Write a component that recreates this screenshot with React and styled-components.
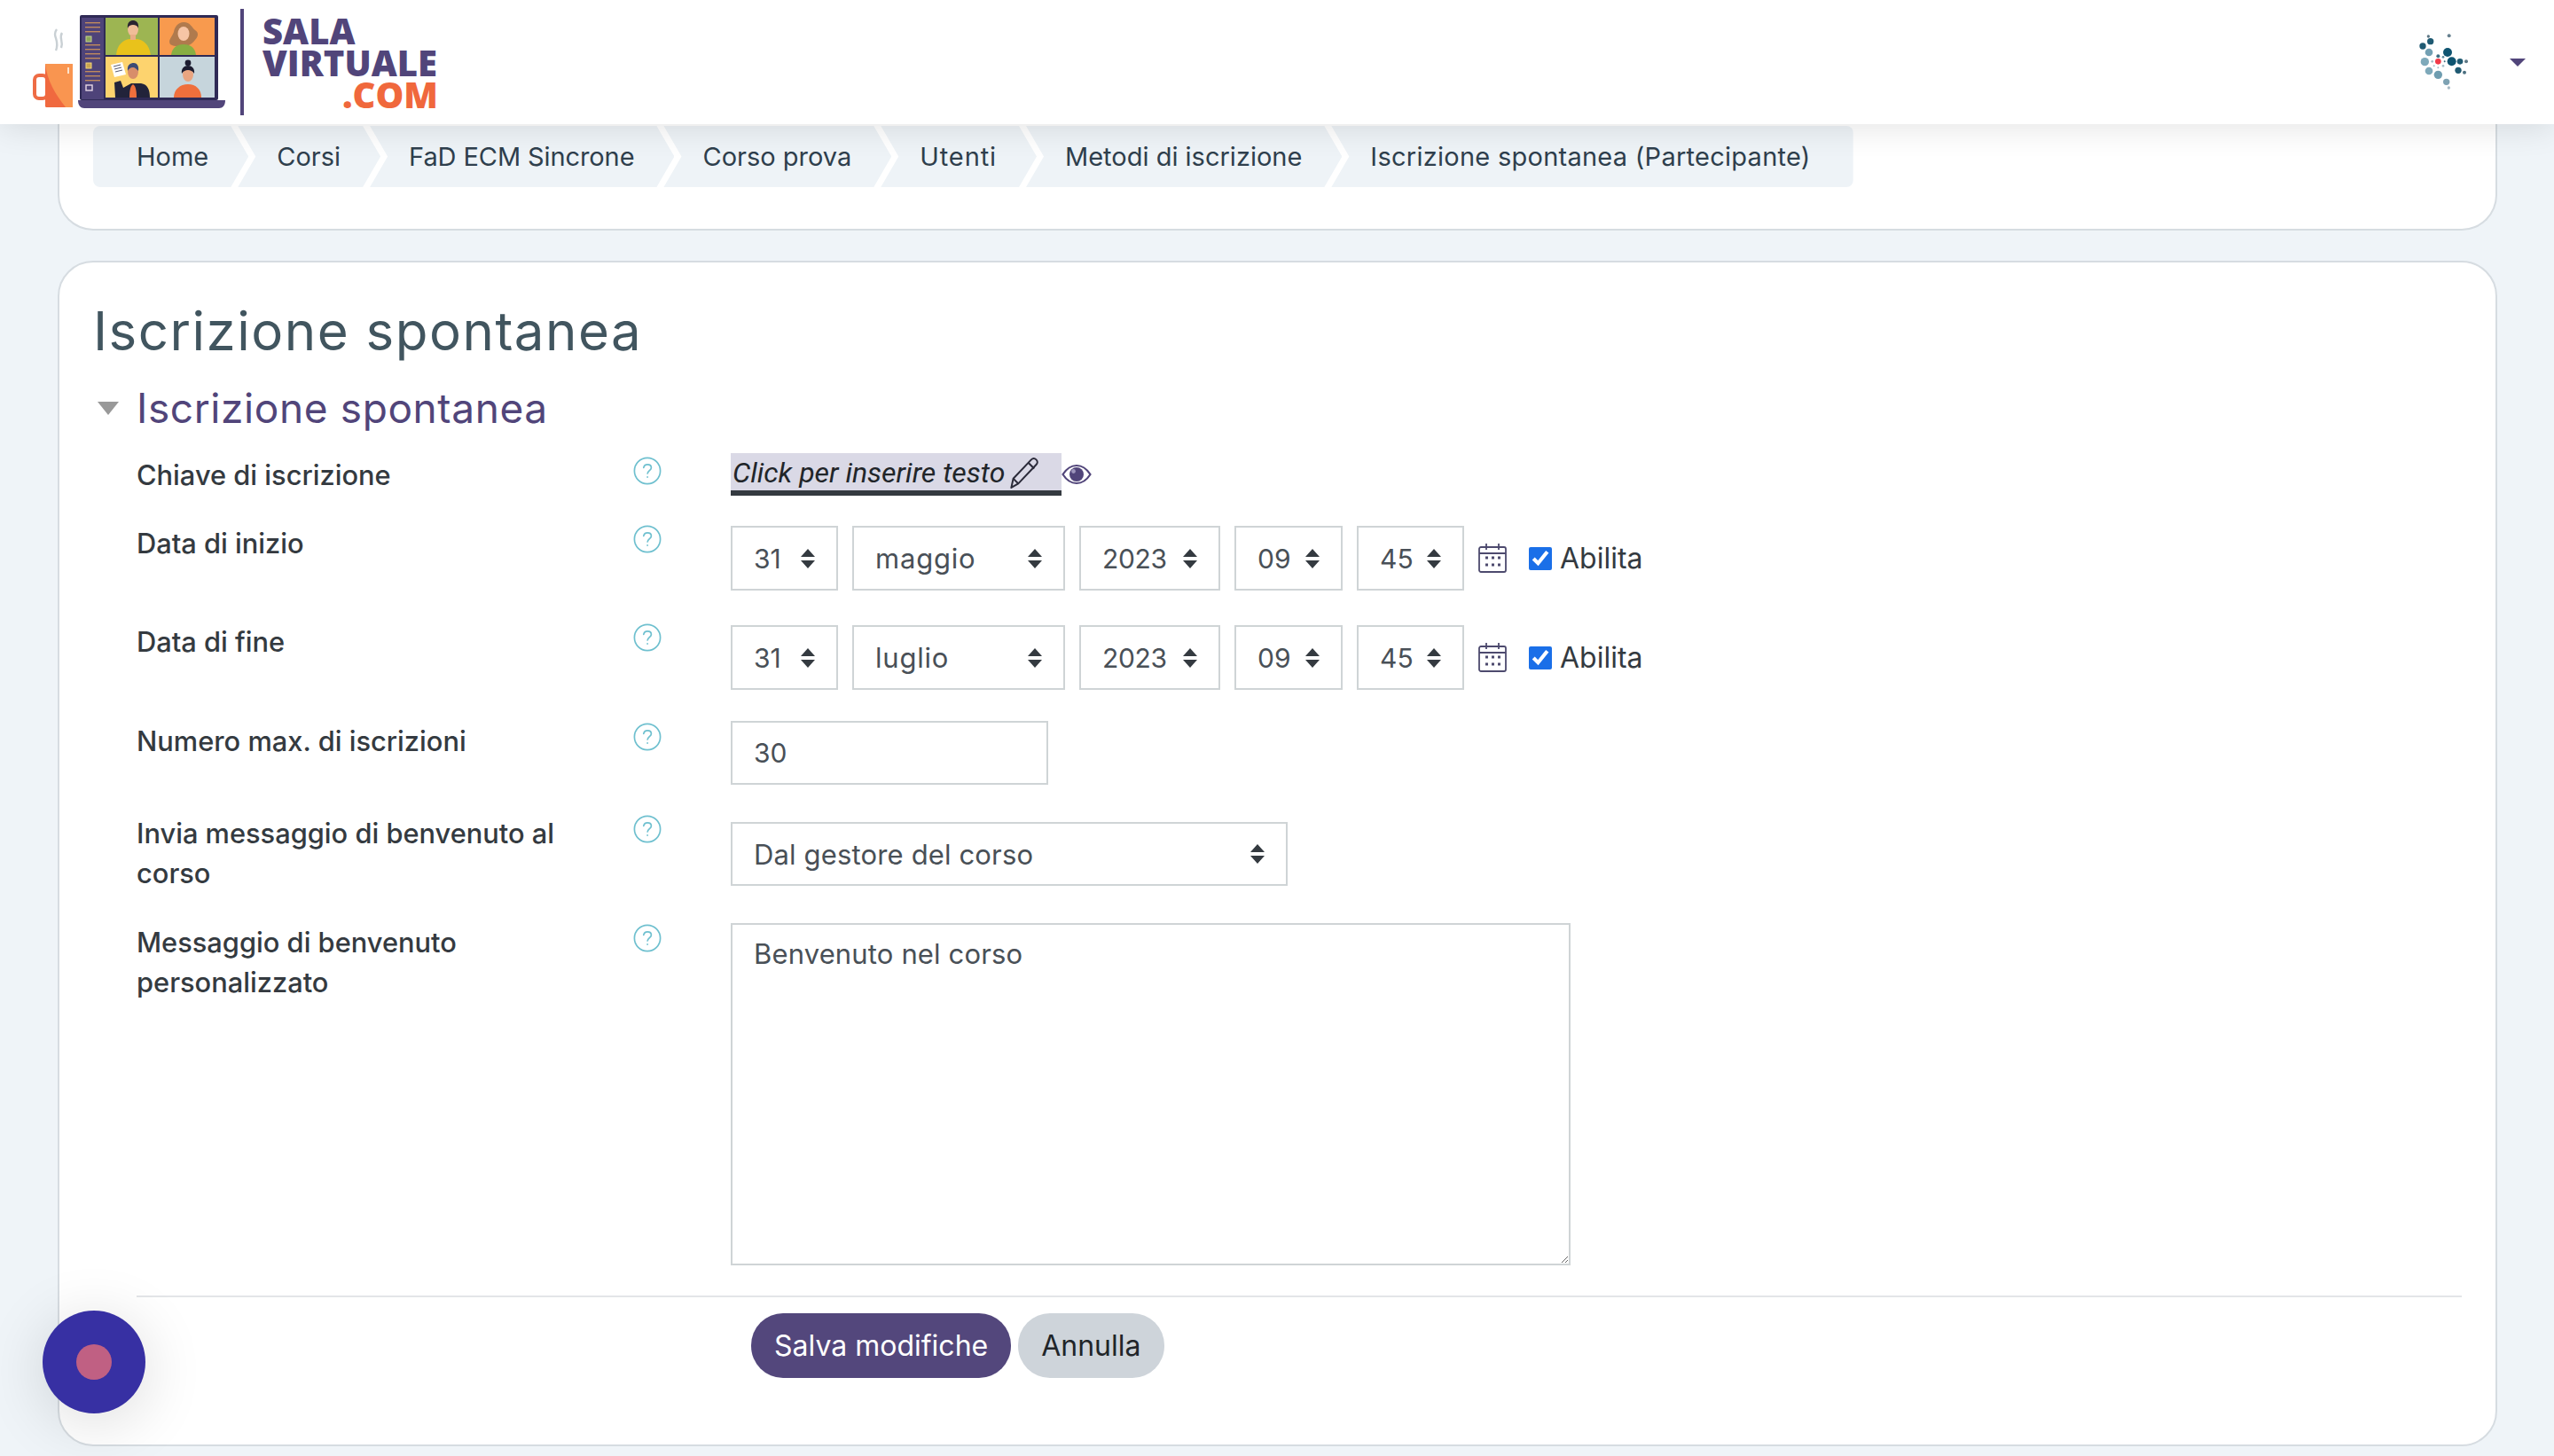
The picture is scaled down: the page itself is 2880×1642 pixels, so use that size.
import styled, { createGlobalStyle } from 'styled-components';

const GlobalStyle = createGlobalStyle`
  * {
    box-sizing: border-box;
  }
  html,
  body {
    margin: 0;
    padding: 0;
    background: #eff4f8;
    font-family: Inter, 'Liberation Sans', sans-serif;
    color: #343a40;
  }
`;

const Page = styled.div`
  position: relative;
  width: 2880px;
  height: 1642px;
  overflow: hidden;
`;

const Header = styled.header`
  position: relative;
  z-index: 2;
  display: flex;
  align-items: center;
  height: 140px;
  padding: 0 32px 0 20px;
  background: #fff;
  box-shadow: 0 2px 36px rgba(0, 0, 0, 0.12);
`;

const LogoDivider = styled.div`
  width: 4px;
  height: 120px;
  margin-left: 6px;
  background: #51457a;
`;

const LogoText = styled.div`
  display: flex;
  flex-direction: column;
  width: 198px;
  margin-left: 21px;
  padding-top: 2px;
  font-family: 'Open Sans', 'Noto Sans', sans-serif;
  font-size: 40px;
  font-weight: 800;
  line-height: 36px;
  color: #51457a;
`;

const LogoCom = styled.span`
  align-self: flex-end;
  color: #f0683c;
`;

const UserMenu = styled.div`
  display: flex;
  align-items: center;
  gap: 44px;
  margin-left: auto;
`;

const Caret = styled.span`
  width: 0;
  height: 0;
  border-top: 9px solid #51457a;
  border-left: 9px solid transparent;
  border-right: 9px solid transparent;
`;

const Content = styled.main`
  display: flex;
  flex-direction: column;
  gap: 34px;
  padding: 0 64px 0 65px;
`;

const TopCard = styled.section`
  height: 120px;
  padding: 2px 38px 0;
  background: #fff;
  border: 2px solid #d6dce1;
  border-top: 0;
  border-radius: 0 0 40px 40px;
`;

const Crumbs = styled.nav`
  display: flex;
  height: 69px;
`;

const Crumb = styled.a`
  display: flex;
  align-items: center;
  height: 100%;
  margin-right: -12px;
  padding: 0 45px 0 44px;
  background: #eef3f7;
  font-size: 29px;
  letter-spacing: ${(p) => p.$ls || 0}px;
  color: #2f3f4d;
  clip-path: polygon(0 0, calc(100% - 20px) 0, 100% 50%, calc(100% - 20px) 100%, 0 100%, 20px 50%);

  &:first-child {
    padding-left: 49px;
    border-radius: 8px 0 0 8px;
    clip-path: polygon(0 0, calc(100% - 20px) 0, 100% 50%, calc(100% - 20px) 100%, 0 100%);
  }

  &:last-child {
    margin-right: 0;
    padding-right: 48px;
    border-radius: 0 8px 8px 0;
    clip-path: polygon(0 0, 100% 0, 100% 100%, 0 100%, 20px 50%);
  }
`;

const MainCard = styled.section`
  height: 1337px;
  padding: 41px 38px 0;
  background: #fff;
  border: 2px solid #d6dce1;
  border-radius: 40px;
`;

const Title = styled.h1`
  margin: 0 0 23px;
  font-size: 60px;
  font-weight: 400;
  line-height: 72px;
  letter-spacing: 1.5px;
  color: #41555f;
`;

const SectionHead = styled.div`
  display: flex;
  align-items: center;
  gap: 20px;
  height: 56px;
  margin: 0 0 23px 5px;
`;

const Toggle = styled.span`
  width: 0;
  height: 0;
  border-top: 15px solid #999;
  border-left: 12px solid transparent;
  border-right: 12px solid transparent;
`;

const SectionTitle = styled.h2`
  margin: 0;
  font-size: 46px;
  font-weight: 400;
  line-height: 56px;
  letter-spacing: 0.6px;
  color: #51457a;
`;

const Form = styled.form`
  padding-left: 49px;
`;

const Row = styled.div`
  display: grid;
  grid-template-columns: 560px 110px 1fr;
  margin-bottom: ${(p) => p.$gap}px;
`;

const KeyRow = styled(Row)`
  padding-top: 2px;
`;

const Label = styled.label`
  max-width: 530px;
  font-size: 30.8px;
  font-weight: 500;
  line-height: 45px;
  color: #343a40;
`;

const HelpSlot = styled.div`
  padding-top: 2px;
  line-height: 0;
`;

const Control = styled.div`
  display: flex;
  align-items: flex-start;
  gap: 16px;
  padding-top: ${(p) => p.$inset || 0}px;
`;

const KeyGroup = styled.div`
  display: flex;
  align-items: center;
  margin-top: -2px;
`;

const KeyEdit = styled.div`
  display: flex;
  align-items: center;
  gap: 4px;
  width: 373px;
  height: 48px;
  padding: 2px 0 0 2px;
  background: #dad9e6;
  border-bottom: 6px solid #343a40;
  font-family: Roboto, sans-serif;
  font-size: 32px;
  font-style: italic;
  color: #212529;
`;

const Select = styled.select`
  appearance: none;
  width: ${(p) => p.$w}px;
  height: ${(p) => p.$h || 73}px;
  padding: 0 0 0 24px;
  background: #fff
    url("data:image/svg+xml,%3Csvg xmlns='http://www.w3.org/2000/svg' width='16' height='22' viewBox='0 0 16 22'%3E%3Cpath fill='%23343a40' d='M8 0l8 9H0zM0 13h16l-8 9z'/%3E%3C/svg%3E")
    no-repeat right 24px center;
  border: 2px solid #cfd4d6;
  border-radius: 0;
  font-family: inherit;
  font-size: ${(p) => p.$size || 30}px;
  letter-spacing: ${(p) => p.$ls || 0}px;
  color: #495057;
`;

const NumberInput = styled.input`
  width: 358px;
  height: 72px;
  padding: 0 24px;
  border: 2px solid #cfd4d6;
  border-radius: 0;
  font-family: inherit;
  font-size: 30px;
  color: #495057;
`;

const MessageArea = styled.textarea`
  display: block;
  width: 947px;
  height: 386px;
  padding: 15px 24px;
  border: 2px solid #cfd4d6;
  border-radius: 0;
  font-family: inherit;
  font-size: 31px;
  line-height: 36px;
  letter-spacing: 0.15px;
  color: #495057;
`;

const DateExtras = styled.div`
  display: flex;
  align-items: center;
  height: 73px;
`;

const EnableLabel = styled.label`
  display: flex;
  align-items: center;
  gap: 9px;
  margin-left: 25px;
  font-size: 32px;
  color: #343a40;
`;

const EnableBox = styled.input`
  width: 26px;
  height: 26px;
  margin: 0;
  accent-color: #1a6fe8;
`;

const Rule = styled.hr`
  margin: 0 0 18px;
  border: 0;
  border-top: 2px solid #e3e5e8;
`;

const Actions = styled.div`
  display: flex;
  gap: 8px;
  padding-left: 693px;
`;

const Button = styled.button`
  height: 73px;
  padding: 0 26px;
  background: ${(p) => (p.$primary ? '#53477c' : '#ced4da')};
  border: 0;
  border-radius: 36px;
  font-family: inherit;
  font-size: 32px;
  color: ${(p) => (p.$primary ? '#fff' : '#212529')};
`;

const RecordWidget = styled.div`
  position: absolute;
  z-index: 3;
  left: 48px;
  top: 1478px;
  display: flex;
  align-items: center;
  justify-content: center;
  width: 116px;
  height: 116px;
  background: #3730a3;
  border-radius: 50%;
  box-shadow: 0 10px 70px rgba(0, 0, 0, 0.14);
`;

const RecordDot = styled.span`
  width: 40px;
  height: 40px;
  background: #c06083;
  border-radius: 50%;
`;

const LogoArt = () => (
  <svg width="245" height="140" viewBox="0 0 245 140">
    {/* mug */}
    <path d="M44 33c-6 8 4 12-1 24M50 37c-4 6 2 9-1 17" fill="none" stroke="#c9d0d4" strokeWidth="2.4" />
    <rect x="19" y="85" width="14" height="26" rx="5" fill="none" stroke="#ee6c45" strokeWidth="4" />
    <rect x="31" y="72" width="31" height="49" rx="1.5" fill="#f0693f" />
    <path d="M31 72h31v49h-8C42 106 33 90 31 72z" fill="#f99550" />
    <rect x="56" y="76" width="2" height="7" fill="#fde3cc" />
    {/* laptop */}
    <rect x="70" y="17" width="156" height="96" rx="2" fill="#2f2a55" />
    <rect x="72" y="20" width="25" height="92" fill="#4e4379" />
    {[25, 30, 35, 50, 55, 60, 65, 80, 85, 90].map((y) => (
      <rect key={y} x="76" y={y} width="17" height="1.4" fill="#c08a5d" />
    ))}
    <rect x="77" y="41" width="6" height="6" fill="#8aa65a" stroke="#c8d090" />
    <rect x="77" y="71" width="6" height="6" fill="#c9a44f" stroke="#f3d67a" />
    <rect x="77" y="96" width="7" height="6" fill="#4e4379" stroke="#e6d8e6" strokeWidth="1.4" />
    <rect x="99" y="20" width="59" height="42" fill="#9db552" />
    <rect x="160" y="20" width="62" height="42" fill="#f89a4e" />
    <rect x="99" y="64" width="59" height="46" fill="#fdd36e" />
    <rect x="160" y="64" width="62" height="46" fill="#c6d5dc" />
    {/* man in sweater */}
    <path d="M111 62c1-12 8-17 15-18h8c8 1 14 6 16 18z" fill="#e9c21b" />
    <ellipse cx="130" cy="33" rx="6" ry="8" fill="#f0bd97" />
    <path d="M124 32c-1-7 3-9 6-9s7 2 6 9c-1-3-3-4-6-4s-5 1-6 4z" fill="#2a2430" />
    <rect x="127" y="39" width="6" height="6" fill="#e8ad85" />
    {/* woman with long hair */}
    <path d="M172 50c-3-5 2-8 4-14 1-6 5-11 11-11 8 0 9 6 13 9 5 3 3 8 0 11-3 4-7 7-12 7-6 0-12 1-16-2z" fill="#b07a4d" />
    <ellipse cx="187" cy="38" rx="6.500" ry="8" fill="#f6c5a5" />
    <path d="M173 62c1-8 6-12 14-12s13 4 14 12z" fill="#88ae42" />
    {/* man with paper */}
    <path d="M110 110l-1-17 7-2 3 8 9-5h11c8 1 10 8 10 16z" fill="#22233a" />
    <path d="M126 110c0-8 1-13 4-15 3 2 4 7 4 15z" fill="#ef6f3c" />
    <ellipse cx="130" cy="81" rx="6" ry="8" fill="#d88e6a" />
    <path d="M124 80c-1-7 3-9 7-9 3 0 6 3 5 9-2-2-4-4-6-4-3 0-5 2-6 4z" fill="#3d4a75" />
    <path d="M105 73l13-3 4 14-13 3z" fill="#fff" />
    <path d="M108 75l8-2M109 78l8-2M110 81l8-2" stroke="#55576f" strokeWidth="1" />
    {/* woman with bun */}
    <path d="M176 110c0-9 7-15 16-15s15 6 15 15z" fill="#ef6f3c" />
    <circle cx="192" cy="71" r="3.400" fill="#1c1c30" />
    <ellipse cx="192" cy="84" rx="6" ry="8" fill="#e9a581" />
    <path d="M185 83c-1-6 3-9 7-9s8 3 7 9c-2-3-4-4-7-4s-5 1-7 4z" fill="#1c1c30" />
    {/* keyboard base */}
    <path d="M68 113h166c0 6-3 9-7 9H75c-4 0-7-3-7-9z" fill="#51457a" />
  </svg>
);

const NetworkAvatar = () => {
  const dots = [
    [295, 130, 5, '#5d7785'], [365, 128, 6, '#66808e'], [302, 147, 11, '#1f5a72'], [276, 163, 11, '#1f5a72'],
    [297, 184, 13, '#73a0b3'], [360, 184, 15, '#0f5470'], [283, 216, 14, '#7ea9ba'], [328, 197, 6, '#3f6c82'],
    [374, 215, 15, '#0f5470'], [402, 215, 10, '#1f5a72'], [423, 215, 6, '#5d7785'], [297, 247, 13, '#7ea9ba'],
    [328, 260, 14, '#6f9db0'], [396, 245, 11, '#1f5a72'], [417, 252, 6, '#4b6f80'], [356, 284, 11, '#7ea2b3'],
    [364, 304, 5, '#a6b9c3'], [345, 200, 4, '#5d8799'], [345, 230, 4, '#a6bcc6'], [308, 215, 4, '#a6bcc6'],
    [350, 215, 3, '#3f6c82'], [328, 236, 3, '#a6bcc6'], [314, 230, 3, '#a6bcc6'],
  ];
  return (
    <svg width="60" height="66" viewBox="258 118 180 198">
      {dots.map(([cx, cy, r, fill]) => (
        <circle key={`${cx}-${cy}`} cx={cx} cy={cy} r={r} fill={fill} />
      ))}
      <circle cx="328" cy="215" r="10" fill="#f23a48" />
    </svg>
  );
};

const HelpIcon = () => (
  <svg width="32" height="32" viewBox="0 0 32 32" fill="none" stroke="#6fc0cf" strokeWidth="1.7">
    <circle cx="16" cy="16" r="14.6" />
    <path d="M11.8 12.4c.4-2.4 2.2-3.6 4.4-3.6 2.4 0 4.2 1.5 4.2 3.6 0 3-4 3.4-4.2 6.6" strokeLinecap="round" />
    <circle cx="16.1" cy="23" r="0.9" fill="#6fc0cf" stroke="none" />
  </svg>
);

const PencilIcon = () => (
  <svg width="36" height="36" viewBox="0 0 32 32" fill="none" stroke="#2b2b3a" strokeWidth="1.8" strokeLinejoin="round">
    <path d="M3 31l2-9L23 3c1.500-1.500 3.500-1.500 5 0s1.500 3.500 0 5L10 27z" />
    <path d="M20 6l6 6M5 22l5 5" />
  </svg>
);

const EyeIcon = () => (
  <svg width="34" height="24" viewBox="0 0 34 24">
    <path d="M1.500 12C6 5 11 2 17 2s11 3 15.500 10C28 19 23 22 17 22S6 19 1.500 12z" fill="none" stroke="#51457a" strokeWidth="2.2" />
    <circle cx="17" cy="12" r="8" fill="#51457a" />
    <circle cx="13.500" cy="8.500" r="2.400" fill="#9d95bc" />
  </svg>
);

const CalendarIcon = () => (
  <svg width="32" height="33" viewBox="0 0 32 33" fill="none" stroke="#4d4a6e" strokeWidth="1.8">
    <rect x="1" y="4" width="30" height="28" rx="2" />
    <path d="M1 11h30M9 0v7M23 0v7" />
    <path d="M8 16h3M15 16h3M22 16h3M8 24h3M15 24h3M22 24h3" strokeWidth="3" />
  </svg>
);

const DateRow = ({ month, inset }) => (
  <Control $inset={inset}>
    <Select $w={121} defaultValue="31"><option>31</option></Select>
    <Select $w={240} $size={31} $ls={0.8} defaultValue={month}><option>{month}</option></Select>
    <Select $w={159} $ls={-0.3} defaultValue="2023"><option>2023</option></Select>
    <Select $w={122} defaultValue="09"><option>09</option></Select>
    <Select $w={121} defaultValue="45"><option>45</option></Select>
    <DateExtras>
      <CalendarIcon />
      <EnableLabel>
        <EnableBox type="checkbox" defaultChecked />
        Abilita
      </EnableLabel>
    </DateExtras>
  </Control>
);

const crumbs = [
  { text: 'Home' },
  { text: 'Corsi' },
  { text: 'FaD ECM Sincrone', ls: -0.1 },
  { text: 'Corso prova' },
  { text: 'Utenti', ls: 0.9 },
  { text: 'Metodi di iscrizione' },
  { text: 'Iscrizione spontanea (Partecipante)', ls: 0.26 },
];

const App = () => (
  <Page>
    <GlobalStyle />
    <Header>
      <LogoArt />
      <LogoDivider />
      <LogoText>
        <span>SALA</span>
        <span>VIRTUALE</span>
        <LogoCom>.COM</LogoCom>
      </LogoText>
      <UserMenu>
        <NetworkAvatar />
        <Caret />
      </UserMenu>
    </Header>
    <Content>
      <TopCard>
        <Crumbs>
          {crumbs.map((crumb) => (
            <Crumb key={crumb.text} $ls={crumb.ls}>{crumb.text}</Crumb>
          ))}
        </Crumbs>
      </TopCard>
      <MainCard>
        <Title>Iscrizione spontanea</Title>
        <SectionHead>
          <Toggle />
          <SectionTitle>Iscrizione spontanea</SectionTitle>
        </SectionHead>
        <Form>
          <KeyRow $gap={31}>
            <Label>Chiave di iscrizione</Label>
            <HelpSlot><HelpIcon /></HelpSlot>
            <KeyGroup>
              <KeyEdit>
                Click per inserire testo
                <PencilIcon />
              </KeyEdit>
              <EyeIcon />
            </KeyGroup>
          </KeyRow>
          <Row $gap={35}>
            <Label>Data di inizio</Label>
            <HelpSlot><HelpIcon /></HelpSlot>
            <DateRow month="maggio" inset={3} />
          </Row>
          <Row $gap={35}>
            <Label>Data di fine</Label>
            <HelpSlot><HelpIcon /></HelpSlot>
            <DateRow month="luglio" inset={4} />
          </Row>
          <Row $gap={32}>
            <Label>Numero max. di iscrizioni</Label>
            <HelpSlot><HelpIcon /></HelpSlot>
            <Control>
              <NumberInput defaultValue="30" />
            </Control>
          </Row>
          <Row $gap={33}>
            <Label>Invia messaggio di benvenuto al corso</Label>
            <HelpSlot><HelpIcon /></HelpSlot>
            <Control $inset={10}>
              <Select $w={628} $h={72} $size={31} $ls={0.15} defaultValue="Dal gestore del corso">
                <option>Dal gestore del corso</option>
              </Select>
            </Control>
          </Row>
          <Row $gap={34}>
            <Label>Messaggio di benvenuto personalizzato</Label>
            <HelpSlot><HelpIcon /></HelpSlot>
            <Control $inset={1}>
              <MessageArea defaultValue="Benvenuto nel corso" />
            </Control>
          </Row>
          <Rule />
          <Actions>
            <Button $primary type="button">Salva modifiche</Button>
            <Button type="button">Annulla</Button>
          </Actions>
        </Form>
      </MainCard>
    </Content>
    <RecordWidget>
      <RecordDot />
    </RecordWidget>
  </Page>
);

export default App;
